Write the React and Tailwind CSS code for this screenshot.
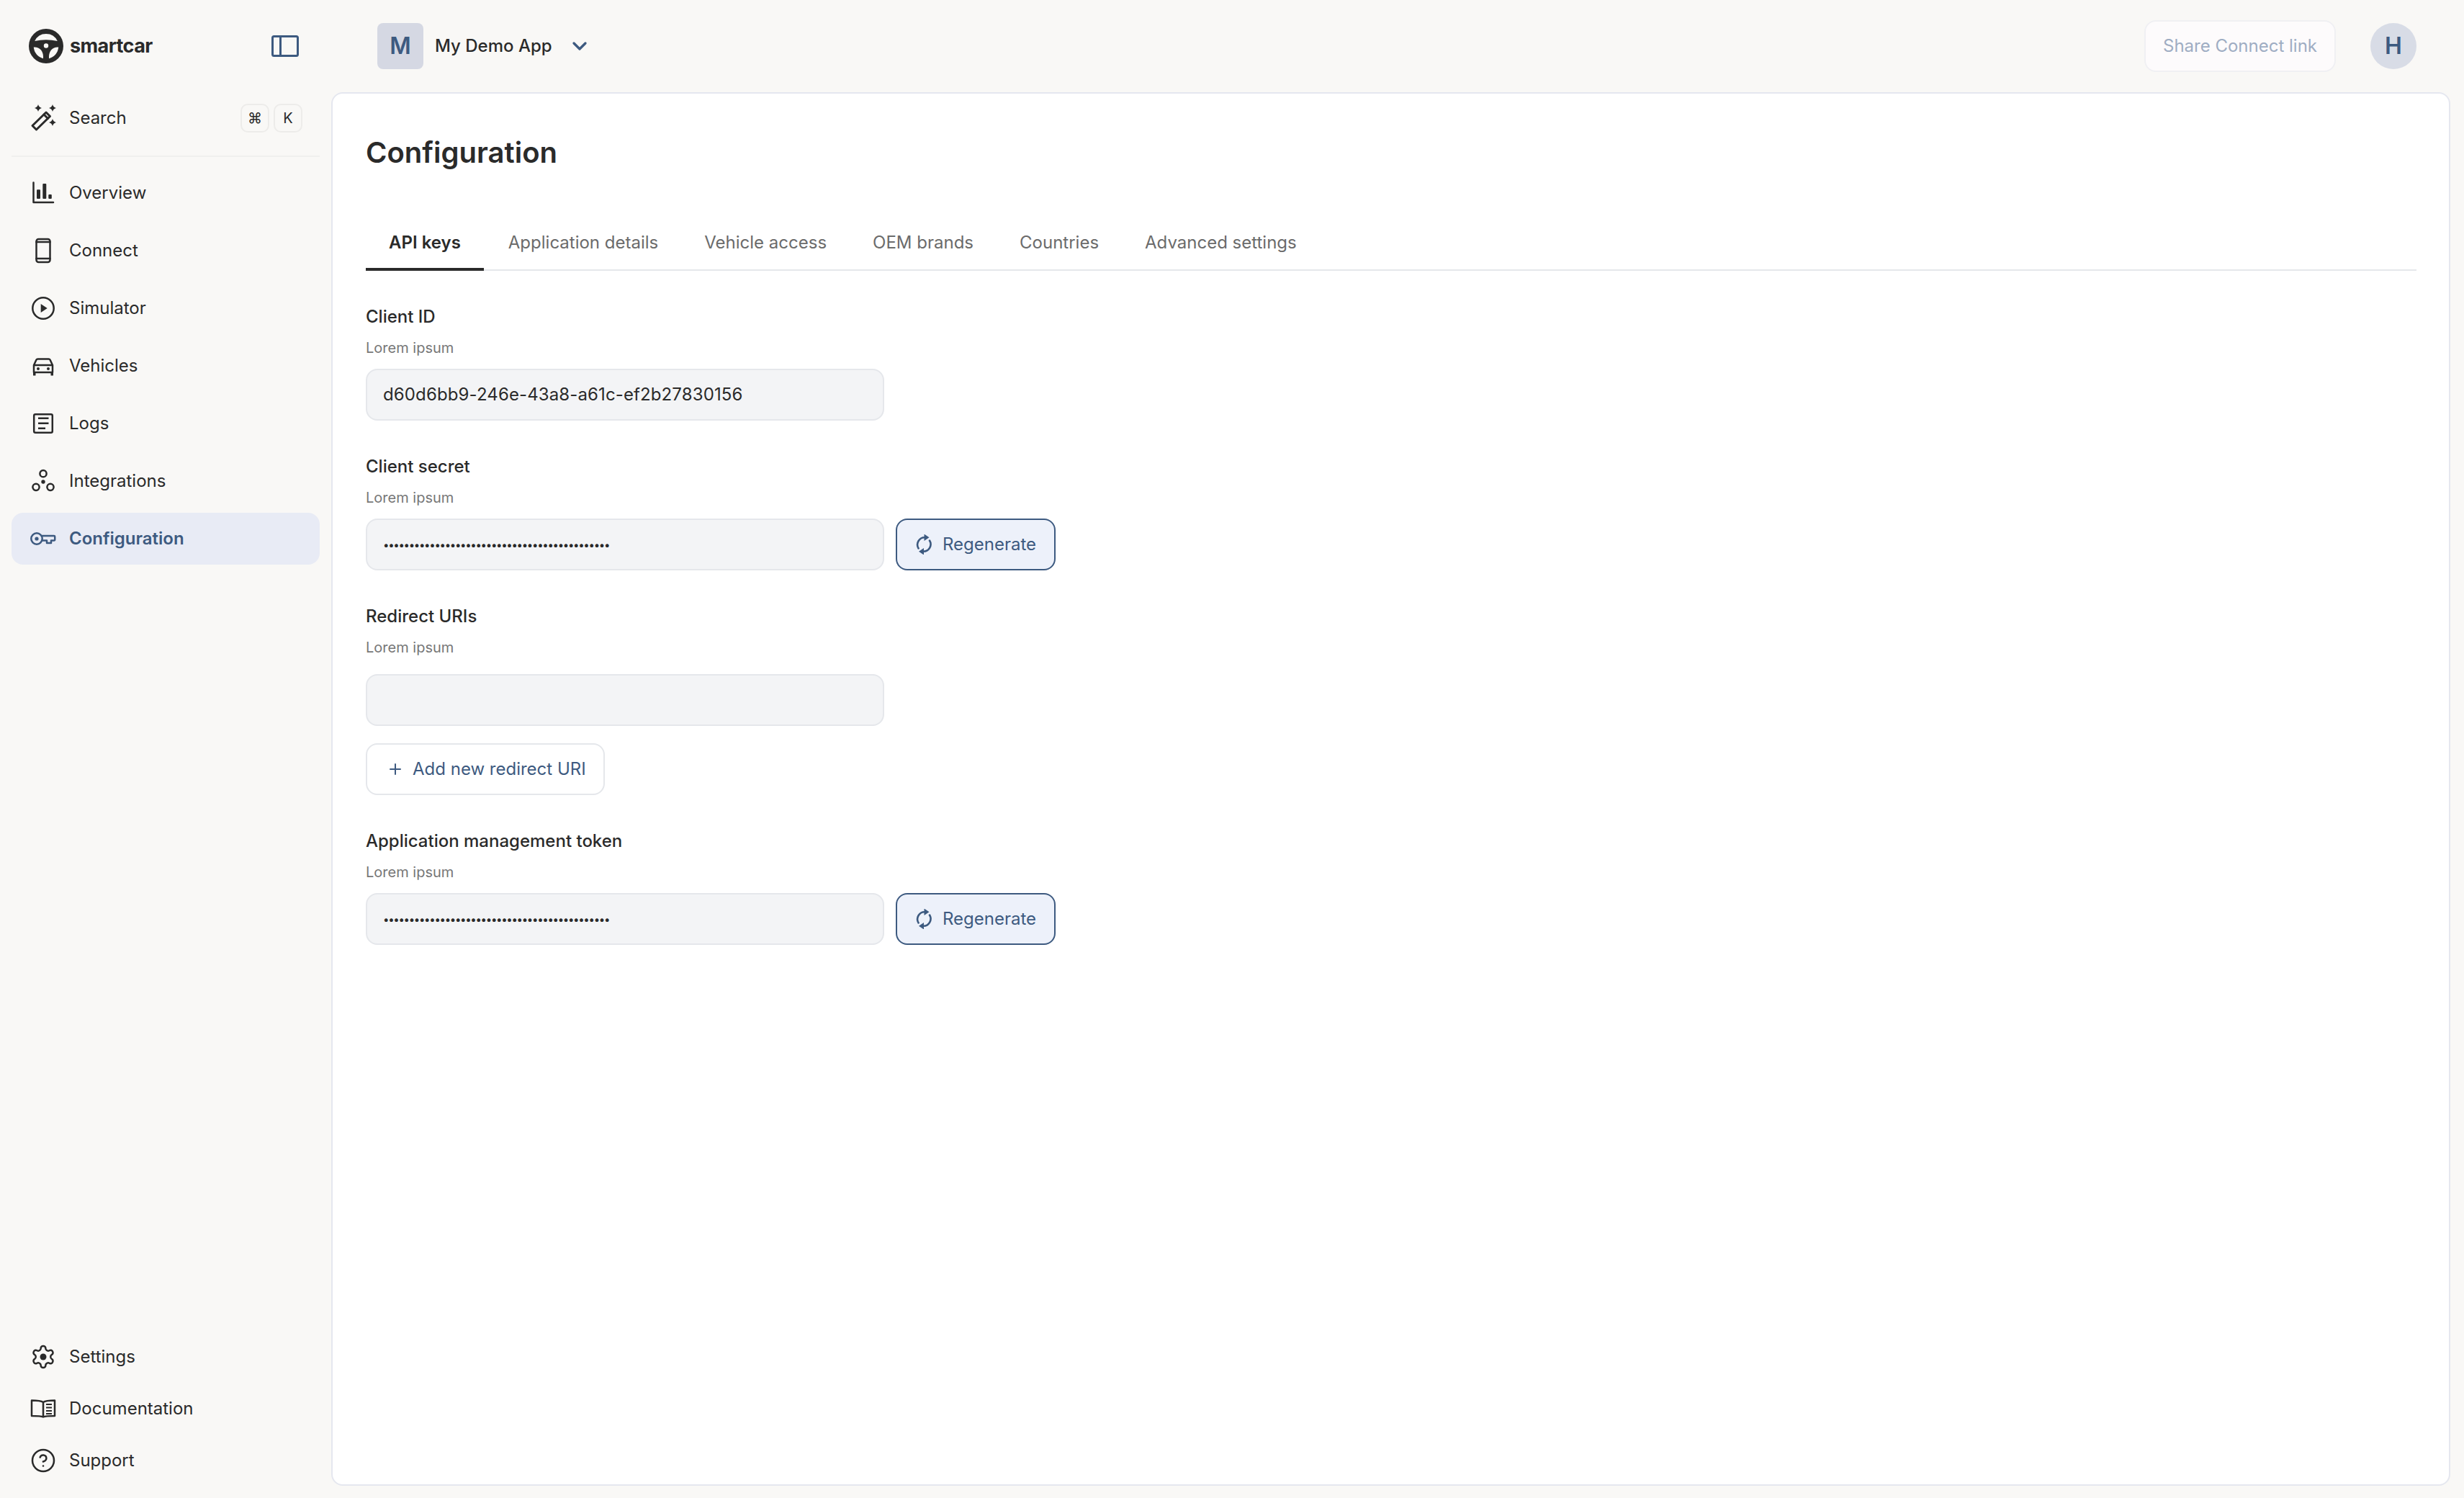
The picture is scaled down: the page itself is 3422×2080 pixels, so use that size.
import React from "react";
import { ChevronDown, Plus, CircleHelp } from "lucide-react";

const Ic = ({ children }) => (
  <svg viewBox="0 0 40 40" fill="none" stroke="currentColor" strokeWidth="2.5" strokeLinecap="round" strokeLinejoin="round" className="w-10 h-10 shrink-0">
    {children}
  </svg>
);

const Spark = ({ x, y, r = 5 }) => (
  <path d={`M${x} ${y - r} Q${x + 1} ${y - 1} ${x + r} ${y} Q${x + 1} ${y + 1} ${x} ${y + r} Q${x - 1} ${y + 1} ${x - r} ${y} Q${x - 1} ${y - 1} ${x} ${y - r}Z`} fill="currentColor" stroke="none" />
);

const icons = {
  wand: (
    <Ic>
      <path d="M5 31.5 L24 13 L29.5 18.5 L10.5 37 Z" strokeWidth="3" transform="translate(0 -1)" />
      <path d="M21 16 L26.5 21.5" strokeWidth="3" transform="translate(0 -1)" />
      <Spark x={13} y={6} />
      <Spark x={33} y={6} />
      <Spark x={33} y={26} />
    </Ic>
  ),
  overview: (
    <Ic>
      <path d="M6.5 5.5 V33 H34" />
      <rect x="11" y="15.3" width="5" height="12.7" rx="1" fill="currentColor" stroke="none" />
      <rect x="19.3" y="7" width="5" height="21" rx="1" fill="currentColor" stroke="none" />
      <rect x="27.3" y="22" width="4.5" height="6" rx="1" fill="currentColor" stroke="none" />
    </Ic>
  ),
  connect: (
    <Ic>
      <rect x="10.5" y="4" width="19" height="32" rx="3" />
      <path d="M10.5 8 H29.5 M10.5 31 H29.5" />
    </Ic>
  ),
  simulator: (
    <Ic>
      <circle cx="20" cy="20" r="14.7" />
      <path d="M16.7 14 L25.7 20 L16.7 26 Z" fill="currentColor" stroke="none" />
    </Ic>
  ),
  vehicles: (
    <Ic>
      <path d="M7 19 L10.5 11.5 Q11 10.5 12.5 10.5 H27.5 Q29 10.5 29.5 11.5 L33 19 V29 H7 Z M7.5 19 H32.5" />
      <circle cx="13" cy="24" r="2" fill="currentColor" stroke="none" />
      <circle cx="27" cy="24" r="2" fill="currentColor" stroke="none" />
      <rect x="6" y="29" width="3.5" height="4.5" rx="0.5" fill="currentColor" stroke="none" />
      <rect x="30.5" y="29" width="3.5" height="4.5" rx="0.5" fill="currentColor" stroke="none" />
    </Ic>
  ),
  logs: (
    <Ic>
      <rect x="7.2" y="7.2" width="25.6" height="25.6" rx="2" />
      <path d="M13 12.8 H27.5 M13 19.8 H27.5 M13 26.8 H23" strokeLinecap="butt" />
    </Ic>
  ),
  integrations: (
    <Ic>
      <circle cx="20" cy="9.7" r="4.6" />
      <circle cx="10" cy="28.3" r="4.6" />
      <circle cx="30" cy="28.3" r="4.6" />
      <circle cx="20" cy="21" r="2.7" fill="currentColor" stroke="none" />
    </Ic>
  ),
  key: (
    <Ic>
      <circle cx="11" cy="20" r="7.7" />
      <circle cx="11" cy="20" r="2.6" fill="currentColor" stroke="none" />
      <path d="M18.5 16 H35 Q36.2 16 36.2 17.2 V21 Q36.2 22.5 35 22.5 H31 V26 H25 V22.5 H18.5" />
    </Ic>
  ),
  settings: (
    <svg viewBox="0 0 24 24" fill="none" stroke="currentColor" strokeWidth="1.67" strokeLinecap="round" strokeLinejoin="round" className="w-10 h-10 shrink-0 scale-90">
      <path d="M12.22 2h-.44a2 2 0 0 0-2 2v.18a2 2 0 0 1-1 1.73l-.43.25a2 2 0 0 1-2 0l-.15-.08a2 2 0 0 0-2.73.73l-.22.38a2 2 0 0 0 .73 2.73l.15.1a2 2 0 0 1 1 1.72v.51a2 2 0 0 1-1 1.74l-.15.09a2 2 0 0 0-.73 2.73l.22.38a2 2 0 0 0 2.73.73l.15-.08a2 2 0 0 1 2 0l.43.25a2 2 0 0 1 1 1.73V20a2 2 0 0 0 2 2h.44a2 2 0 0 0 2-2v-.18a2 2 0 0 1 1-1.73l.43-.25a2 2 0 0 1 2 0l.15.08a2 2 0 0 0 2.73-.73l.22-.39a2 2 0 0 0-.73-2.73l-.15-.08a2 2 0 0 1-1-1.74v-.5a2 2 0 0 1 1-1.74l.15-.09a2 2 0 0 0 .73-2.73l-.22-.38a2 2 0 0 0-2.73-.73l-.15.08a2 2 0 0 1-2 0l-.43-.25a2 2 0 0 1-1-1.73V4a2 2 0 0 0-2-2z" />
      <circle cx="12" cy="12" r="3" fill="currentColor" stroke="none" />
    </svg>
  ),
  docs: (
    <Ic>
      <path d="M20 11 C17 9 13 8.5 4 8.5 V30 C12 30 17 30 20 31.5 C23 30 28 30 36 30 V8.5 C27 8.5 23 9 20 11 Z M20 11 V31" strokeLinecap="butt" />
      <path d="M24 14 H32 M24 18.5 H32 M24 23 H32 M24 27 H32" strokeWidth="2" strokeLinecap="butt" />
    </Ic>
  ),
  support: <CircleHelp className="w-10 h-10 shrink-0 scale-90" strokeWidth={1.67} />,
};

const Logo = () => (
  <svg viewBox="0 0 48 48" className="w-12 h-12 shrink-0">
    <circle cx="24" cy="24" r="24" fill="#2a2a2a" />
    <path d="M8.2 17 A17.5 17.5 0 0 1 39.8 17 Q24 13.5 8.2 17 Z" fill="#f9f8f6" />
    <path d="M6.8 25.5 Q13 25 17 29.5 Q20.5 34 20 41.2 A17.5 17.5 0 0 1 6.8 25.5 Z" fill="#f9f8f6" />
    <path d="M41.2 25.5 Q35 25 31 29.5 Q27.5 34 28 41.2 A17.5 17.5 0 0 0 41.2 25.5 Z" fill="#f9f8f6" />
    <circle cx="24" cy="23.5" r="3.2" fill="#f9f8f6" />
  </svg>
);

const Regen = () => (
  <svg viewBox="0 0 24 28" fill="none" stroke="currentColor" strokeWidth="2.6" className="w-6 h-7 shrink-0">
    <path d="M12.5 4.3 A10 10 0 0 0 3.6 19.5" strokeLinecap="round" />
    <path d="M11.5 -0.5 L18.5 4.3 L11.5 9 Z" fill="currentColor" stroke="none" />
    <path d="M10 23.7 A10 10 0 0 0 19 8.5" strokeLinecap="round" />
    <path d="M11 28.5 L4 23.7 L11 19 Z" fill="currentColor" stroke="none" />
  </svg>
);

const NavItem = ({ icon, label, active, h = "h-[72px]" }) => (
  <div className={`flex items-center gap-[16px] rounded-[16px] pl-[24px] ${h} ${active ? "bg-[#e8ebf5] text-[#3d5a80] font-semibold" : "text-[#2a2a2a]"}`}>
    {icons[icon]}
    <span className="text-[24px] leading-[32px]">{label}</span>
  </div>
);

const Kbd = ({ children }) => (
  <span className="flex h-[40px] w-[40px] items-center justify-center rounded-[10px] border-2 border-[#edecea] text-[20px] text-[#2a2a2a]">
    {children}
  </span>
);

const Label = ({ title, extra = "" }) => (
  <div className={extra}>
    <div className="text-[24px] leading-[32px] font-medium text-[#2a2a2a]">{title}</div>
    <div className="mt-[13px] text-[20px] leading-[28px] text-[#777777]">Lorem ipsum</div>
  </div>
);

const Field = ({ children }) => (
  <div className="flex h-[72px] w-[720px] items-center rounded-[16px] border-2 border-[#e5e7eb] bg-[#f3f4f6] px-[22px] text-[24px] tracking-[0.12px] text-[#2a2a2a]">
    {children}
  </div>
);

const RegenBtn = () => (
  <button className="flex h-[72px] w-[222px] items-center rounded-[16px] border-2 border-[#3d5a80] bg-[#edf1fa] pl-[26px] text-[24px] text-[#3d5a80]">
    <Regen />
    <span className="ml-[13px]">Regenerate</span>
  </button>
);

const dots = "•".repeat(44);
const Secret = () => <span className="text-[15px] tracking-[-1.3px] leading-none">{dots}</span>;

const tabs = ["API keys", "Application details", "Vehicle access", "OEM brands", "Countries", "Advanced settings"];

export default function App() {
  return (
    <div className="flex h-[2080px] w-[3422px] bg-[#f9f8f6] font-['Inter',sans-serif] overflow-hidden">
      <aside className="flex w-[460px] shrink-0 flex-col pb-[16px] pl-[16px] pr-[16px]">
        <div className="flex h-[128px] items-center justify-between pl-[24px] pr-[29px]">
          <div className="flex items-center gap-[9px]">
            <Logo />
            <span className="text-[27px] font-bold tracking-[-0.6px] text-[#2a2a2a]">smartcar</span>
          </div>
          <svg viewBox="0 0 38 30" fill="none" stroke="#3d5a80" strokeWidth="3" className="h-[30px] w-[38px]">
            <rect x="1.5" y="1.5" width="35" height="27" rx="2" />
            <path d="M12.5 1.5 V28.5" />
          </svg>
        </div>
        <div className="flex h-[72px] items-center justify-between pl-[24px] pr-[24px] text-[#2a2a2a]">
          <div className="flex items-center gap-[16px]">
            {icons.wand}
            <span className="text-[24px] leading-[32px]">Search</span>
          </div>
          <div className="flex gap-[6px]">
            <Kbd>⌘</Kbd>
            <Kbd>K</Kbd>
          </div>
        </div>
        <div className="mt-[16px] h-[2px] bg-[#f0f0ee]" />
        <nav className="mt-[14px] flex flex-col gap-[8px]">
          <NavItem icon="overview" label="Overview" />
          <NavItem icon="connect" label="Connect" />
          <NavItem icon="simulator" label="Simulator" />
          <NavItem icon="vehicles" label="Vehicles" />
          <NavItem icon="logs" label="Logs" />
          <NavItem icon="integrations" label="Integrations" />
          <NavItem icon="key" label="Configuration" active />
        </nav>
        <div className="mt-auto flex flex-col">
          <NavItem icon="settings" label="Settings" />
          <NavItem icon="docs" label="Documentation" />
          <NavItem icon="support" label="Support" />
        </div>
      </aside>
      <div className="flex min-w-0 flex-1 flex-col pr-[19px] pb-[17px]">
        <header className="flex h-[128px] shrink-0 items-center justify-between pl-[64px] pr-[47px]">
          <div className="flex items-center">
            <div className="flex h-[64px] w-[64px] items-center justify-center rounded-[8px] bg-[#d5d8e3] text-[32px] font-semibold text-[#3d5a80]">M</div>
            <span className="ml-[16px] text-[24px] font-medium text-[#2a2a2a]">My Demo App</span>
            <ChevronDown className="ml-[22px] h-[32px] w-[32px] text-[#3d5a80]" strokeWidth={2.5} />
          </div>
          <div className="flex items-center gap-[48px]">
            <button className="flex h-[72px] items-center rounded-[16px] border-2 border-[#f0f0f3] bg-[#fdfbfc] px-[24px] text-[24px] text-[#9fadc3]">
              Share Connect link
            </button>
            <div className="flex h-[64px] w-[64px] items-center justify-center rounded-full bg-[#d8dce6] text-[32px] font-semibold text-[#3d5a80]">H</div>
          </div>
        </header>
        <main className="flex-1 rounded-[16px] border-2 border-[#e5e7ef] bg-white pl-[46px] pr-[45px] pt-[54px]">
          <h1 className="text-[40px] leading-[56px] font-semibold text-[#2a2a2a]">Configuration</h1>
          <div className="mt-[62px] flex h-[74px] border-b-2 border-[#e5e7eb]">
            {tabs.map((t, i) => (
              <div key={t} className={`h-[74px] px-[32px] pt-[19px] text-[24px] leading-[32px] ${i === 0 ? "border-b-4 border-[#2a2a2a] font-semibold text-[#2a2a2a]" : "text-[#6b6b6b]"} ${i === 1 ? "ml-[2px]" : ""}`}>
                {t}
              </div>
            ))}
          </div>
          <div className="mt-[48px] flex flex-col gap-[48px]">
            <section>
              <Label title="Client ID" />
              <div className="mt-[15px]">
                <Field>d60d6bb9-246e-43a8-a61c-ef2b27830156</Field>
              </div>
            </section>
            <section>
              <Label title="Client secret" />
              <div className="mt-[15px] flex gap-[16px]">
                <Field><Secret /></Field>
                <RegenBtn />
              </div>
            </section>
            <section>
              <Label title="Redirect URIs" />
              <div className="mt-[23px]">
                <Field />
              </div>
              <button className="mt-[24px] flex h-[72px] items-center gap-[12px] rounded-[16px] border-2 border-[#e5e7eb] bg-white pl-[27px] pr-[24px] text-[24px] text-[#3d5a80]">
                <Plus className="h-[24px] w-[24px]" strokeWidth={2} />
                Add new redirect URI
              </button>
            </section>
            <section>
              <Label title="Application management token" />
              <div className="mt-[15px] flex gap-[16px]">
                <Field><Secret /></Field>
                <RegenBtn />
              </div>
            </section>
          </div>
        </main>
      </div>
    </div>
  );
}
